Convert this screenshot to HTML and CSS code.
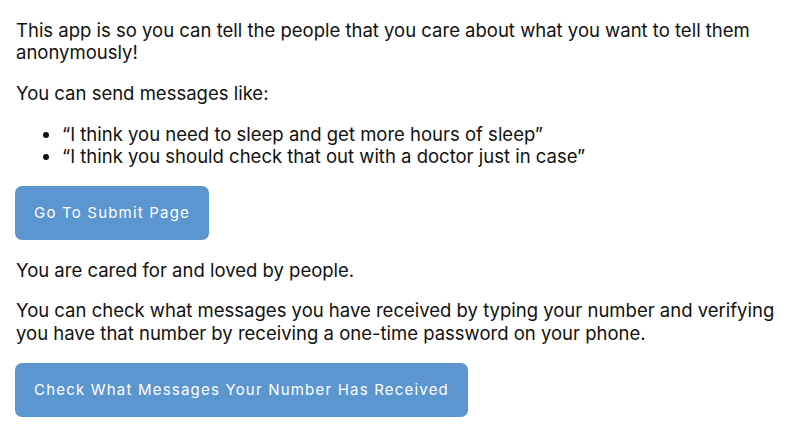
FILE: index.html
```
<!DOCTYPE html>
<html>
<head>
<meta charset="utf-8">
<link rel="stylesheet" href="styles.css">
</head>
<body>
<main class="page">
  <p class="text">This app is so you can tell the people that you care about what you want to tell them anonymously!</p>
  <p class="text">You can send messages like:</p>
  <ul class="examples">
    <li>“I think you need to sleep and get more hours of sleep”</li>
    <li>“I think you should check that out with a doctor just in case”</li>
  </ul>
  <button class="btn">Go To Submit Page</button>
  <p class="text">You are cared for and loved by people.</p>
  <p class="text">You can check what messages you have received by typing your number and verifying you have that number by receiving a one-time password on your phone.</p>
  <button class="btn">Check What Messages Your Number Has Received</button>
</main>
</body>
</html>
```
FILE: styles.css
```
html, body {
  margin: 0;
  padding: 0;
  background: #ffffff;
}
.page {
  padding: 0 16px;
  font-family: Inter, "Noto Sans", sans-serif;
  font-size: 18.5px;
  line-height: 22.4px;
  color: #111111;
}
.text {
  margin: 18.5px 0;
}
.examples {
  margin: 18.5px 0;
  padding-left: 46px;
}
.btn {
  display: block;
  margin-left: -1px;
  font-family: Inter, "Noto Sans", sans-serif;
  font-size: 15px;
  letter-spacing: 1.2px;
  color: #ffffff;
  background: #5b96d0;
  border: none;
  border-radius: 7px;
  padding: 18px 19px;
  line-height: 18px;
}
```
